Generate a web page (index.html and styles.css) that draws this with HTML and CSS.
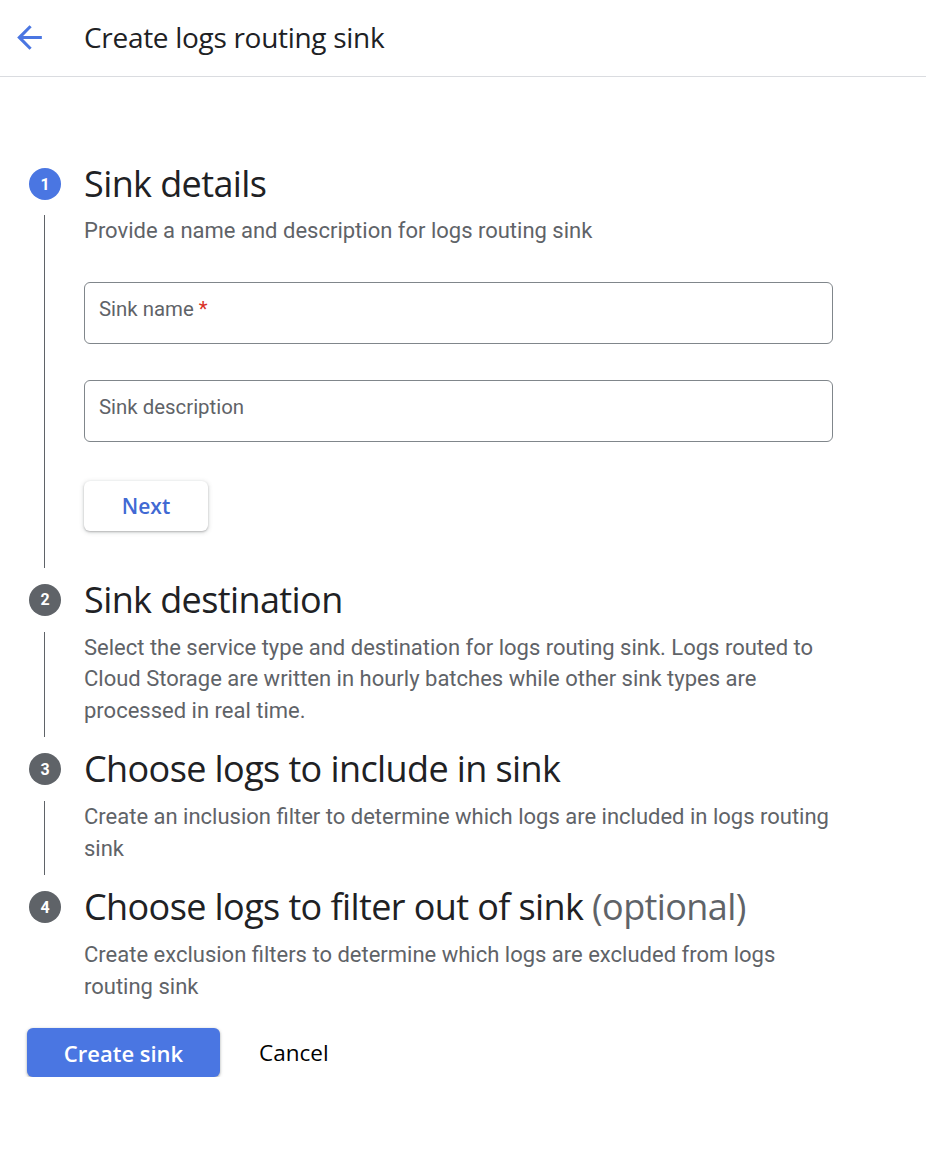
FILE: index.html
```html
<!DOCTYPE html>
<html lang="en">
<head>
<meta charset="utf-8">
<title>Create logs routing sink</title>
<link rel="stylesheet" href="styles.css">
</head>
<body>
<header class="topbar">
  <button class="back" aria-label="Back">
    <svg viewBox="0 0 24 24" width="37" height="37"><path d="M20 11H7.83l5.59-5.59L12 4l-8 8 8 8 1.41-1.41L7.83 13H20v-2z" fill="#4a76e2"/></svg>
  </button>
  <h1 class="title">Create logs routing sink</h1>
</header>
<main class="main">
  <section class="step">
    <div class="step-head">
      <span class="num active">1</span>
      <h2 class="step-title">Sink details</h2>
    </div>
    <div class="step-body first">
      <p class="desc">Provide a name and description for logs routing sink</p>
      <div class="field f1"><span class="label">Sink name <span class="req">*</span></span></div>
      <div class="field f2"><span class="label">Sink description</span></div>
      <button class="next">Next</button>
    </div>
  </section>
  <section class="step">
    <div class="step-head">
      <span class="num">2</span>
      <h2 class="step-title">Sink destination</h2>
    </div>
    <div class="step-body">
      <p class="desc">Select the service type and destination for logs routing sink. Logs routed to Cloud Storage are written in hourly batches while other sink types are processed in real time.</p>
    </div>
  </section>
  <section class="step">
    <div class="step-head">
      <span class="num">3</span>
      <h2 class="step-title">Choose logs to include in sink</h2>
    </div>
    <div class="step-body">
      <p class="desc">Create an inclusion filter to determine which logs are included in logs routing sink</p>
    </div>
  </section>
  <section class="step">
    <div class="step-head">
      <span class="num">4</span>
      <h2 class="step-title">Choose logs to filter out of sink <span class="opt">(optional)</span></h2>
    </div>
    <div class="step-body last">
      <p class="desc">Create exclusion filters to determine which logs are excluded from logs routing sink</p>
    </div>
  </section>
  <div class="actions">
    <button class="create">Create sink</button>
    <button class="cancel">Cancel</button>
  </div>
</main>
</body>
</html>
```

FILE: styles.css
```css
* { box-sizing: border-box; }
html, body { margin: 0; padding: 0; background: #fff; }
body { font-family: Roboto, "Liberation Sans", sans-serif; color: #202124; }

.topbar {
  height: 77px;
  border-bottom: 1px solid #dadce0;
  display: flex;
  align-items: center;
  padding-left: 11px;
}
.back {
  border: 0; background: none; padding: 0; margin: 0;
  width: 37px; height: 37px; display: flex;
  margin-top: -2px;
}
.title {
  margin: 0 0 0 36px;
  font-family: "Open Sans", sans-serif;
  font-weight: 400;
  font-size: 28px;
  letter-spacing: -0.3px;
  color: #202124;
  margin-top: -2px;
}

.main { padding: 87px 0 0 29px; }

.step-head {
  display: flex;
  align-items: center;
  height: 40px;
  gap: 23px;
}
.num {
  width: 32px; height: 32px;
  border-radius: 50%;
  background: #5f6368;
  color: #fff;
  font-family: Roboto, sans-serif;
  font-weight: 700;
  font-size: 16px;
  display: flex; align-items: center; justify-content: center;
  flex-shrink: 0;
}
.num.active { background: #4a76e2; }
.step-title {
  margin: 0;
  font-family: "Open Sans", sans-serif;
  font-weight: 400;
  font-size: 36px;
  letter-spacing: -0.6px;
  color: #202124;
  line-height: 40px;
  white-space: nowrap;
}
.opt { color: #5f6368; }

.step-body {
  margin: 12px 0 12px 15px;
  border-left: 1px solid #5f6368;
  padding: 0 0 11px 39px;
}
.step-body.first { margin-top: 11px; padding-bottom: 37px; }
.step-body.last { border-left-color: transparent; margin-bottom: 0; padding-bottom: 0; }

.desc {
  margin: 0;
  font-size: 22px;
  line-height: 31.5px;
  color: #5f6368;
  max-width: 750px;
}

.field {
  width: 749px;
  height: 62px;
  border: 1px solid #80868b;
  border-radius: 6px;
  padding: 13px 0 0 14px;
}
.f1 { margin-top: 35px; }
.f2 { margin-top: 36px; }
.label { font-size: 20.4px; color: #5f6368; line-height: 26px; }
.req { color: #d93025; }

.next {
  margin-top: 39px;
  width: 124px; height: 50px;
  background: #fff;
  border: 0;
  border-radius: 6px;
  box-shadow: 0 1px 2px rgba(60,64,67,.3), 0 1px 4px 1px rgba(60,64,67,.15);
  color: #4169d3;
  font-family: "Open Sans", sans-serif;
  font-weight: 600;
  font-size: 21px;
  display: block;
}

.actions {
  margin: 26px 0 0 -2px;
  display: flex;
  align-items: center;
  gap: 15px;
}
.create {
  width: 193px; height: 49px;
  background: #4a76e2;
  color: #fff;
  border: 0;
  border-radius: 6px;
  box-shadow: 0 1px 2px rgba(60,64,67,.3), 0 1px 3px 1px rgba(60,64,67,.15);
  font-family: "Open Sans", sans-serif;
  font-weight: 600;
  font-size: 22px;
}
.cancel {
  height: 49px;
  padding: 0 24px;
  background: none;
  border: 0;
  color: #000;
  font-family: "Open Sans", sans-serif;
  font-weight: 500;
  font-size: 22.5px;
}
```
